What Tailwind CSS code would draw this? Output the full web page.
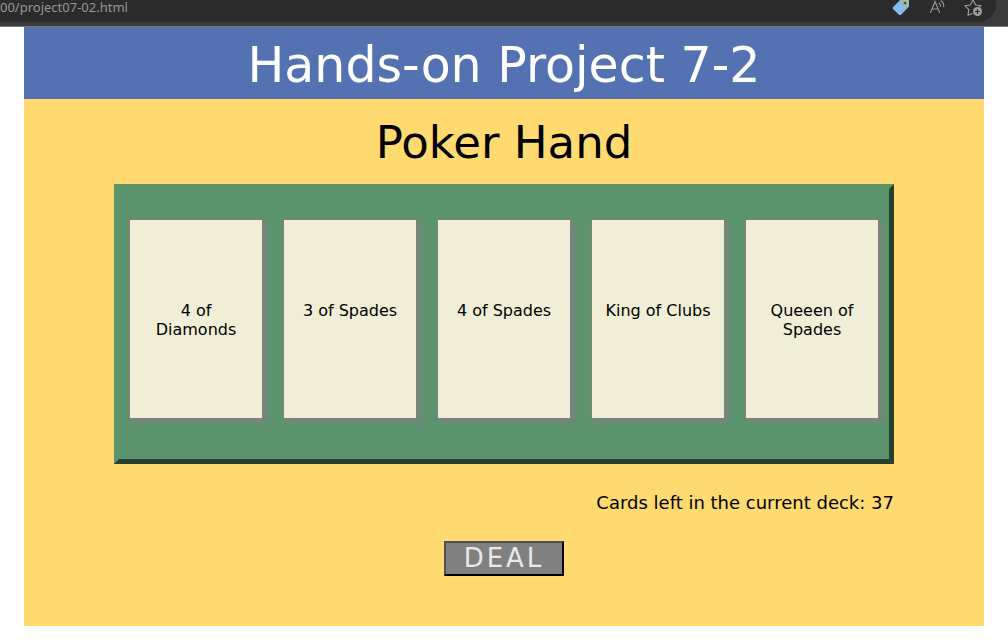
<!DOCTYPE html>
<html lang="en">
<head>
<meta charset="utf-8">
<title>Hands-on Project 7-2</title>
<script src="https://cdn.jsdelivr.net/npm/@tailwindcss/browser@4"></script>
</head>
<body class="bg-white font-['DejaVu_Sans',sans-serif] text-black">
<div class="h-[27px] border-b border-[#777] bg-[#3b3b3b] pr-3">
  <div class="flex h-[22px] items-start justify-between rounded-br-[18px] bg-[#2b2b2b] pr-3">
    <span class="font-['Noto_Sans',sans-serif] text-[13px] leading-[14px] text-[#979797]">00/project07-02.html</span>
    <div class="flex items-start gap-[18px]">
      <button type="button" aria-label="Shopping" class="block">
        <svg class="block" width="18" height="18" viewBox="0 0 18 18"><path d="M9-1h7q1 0 1 1v6.500L9.300 14.500q-1.300 1.200-2.600 0L1.200 9.300q-1.200-1.200 0-2.400z" fill="#83bdec"/><circle cx="13" cy="3" r="1.700" fill="#333" stroke="#d5a414" stroke-width="1.300"/></svg>
      </button>
      <button type="button" aria-label="Read aloud" class="block">
        <svg class="block" width="18" height="18" viewBox="0 0 18 18" fill="none" stroke="#999" stroke-width="1.100" stroke-linecap="round"><path d="M2.500 12.500 7 1.500l4.500 11M4 9h6"/><path d="M11 3q1.800 1.300 1.500 3.500M13 .8q3.200 2.200 2.700 6"/></svg>
      </button>
      <button type="button" aria-label="Add to favorites" class="block">
        <svg class="block" width="20" height="18" viewBox="0 0 20 18"><path d="M8.500 13.500 4 15.200 4.800 9.600 1 5.800l5.300-.8L9-.2 11.700 5l5.300.8-2 2" fill="none" stroke="#a0a0a0" stroke-width="1.100" stroke-linejoin="round"/><circle cx="13.500" cy="11.500" r="4.500" fill="#a0a0a0"/><path d="M13.500 9v5M11 11.500h5" stroke="#2b2b2b" stroke-width="1.200"/></svg>
      </button>
    </div>
  </div>
</div>
<div class="mx-6 bg-[#ffda70] pb-[50px]">
  <header class="bg-[#5472b2] py-1 text-center text-white">
    <h1 class="pt-[5px] text-[49px] leading-[59px]">Hands-on Project 7-2</h1>
  </header>
  <main class="mx-auto w-[81.25%] text-center">
    <h2 class="pt-4 text-[45px] leading-[56px]">Poker Hand</h2>
    <div class="mt-[13px] grid grid-cols-5 gap-5 border-5 border-t-[#5c946e] border-r-[#27412f] border-b-[#27412f] border-l-[#5c946e] bg-[#5c946e] pt-[30px] pr-[10px] pb-10 pl-[10px]">
      <div class="h-[200px] border border-[#808080] bg-[#f0eed6] px-1 pt-[81px] leading-[19px] shadow-[3px_3px_5px_#808080]">4 of<br>Diamonds</div>
      <div class="h-[200px] border border-[#808080] bg-[#f0eed6] px-1 pt-[81px] leading-[19px] shadow-[3px_3px_5px_#808080]">3 of Spades</div>
      <div class="h-[200px] border border-[#808080] bg-[#f0eed6] px-1 pt-[81px] leading-[19px] shadow-[3px_3px_5px_#808080]">4 of Spades</div>
      <div class="h-[200px] border border-[#808080] bg-[#f0eed6] px-1 pt-[81px] leading-[19px] shadow-[3px_3px_5px_#808080]">King of Clubs</div>
      <div class="h-[200px] border border-[#808080] bg-[#f0eed6] px-1 pt-[81px] leading-[19px] shadow-[3px_3px_5px_#808080]">Queeen of<br>Spades</div>
    </div>
    <p class="mt-7 text-right text-[18px] leading-[22px]">Cards left in the current deck: 37</p>
    <button type="button" class="mx-auto mt-[27px] block border-2 border-t-[#505050] border-r-black border-b-black border-l-[#505050] bg-[#808080] px-[18px] text-[26px] leading-[31px] tracking-[3px] text-[#e8e8e8]">DEAL</button>
  </main>
</div>
</body>
</html>
